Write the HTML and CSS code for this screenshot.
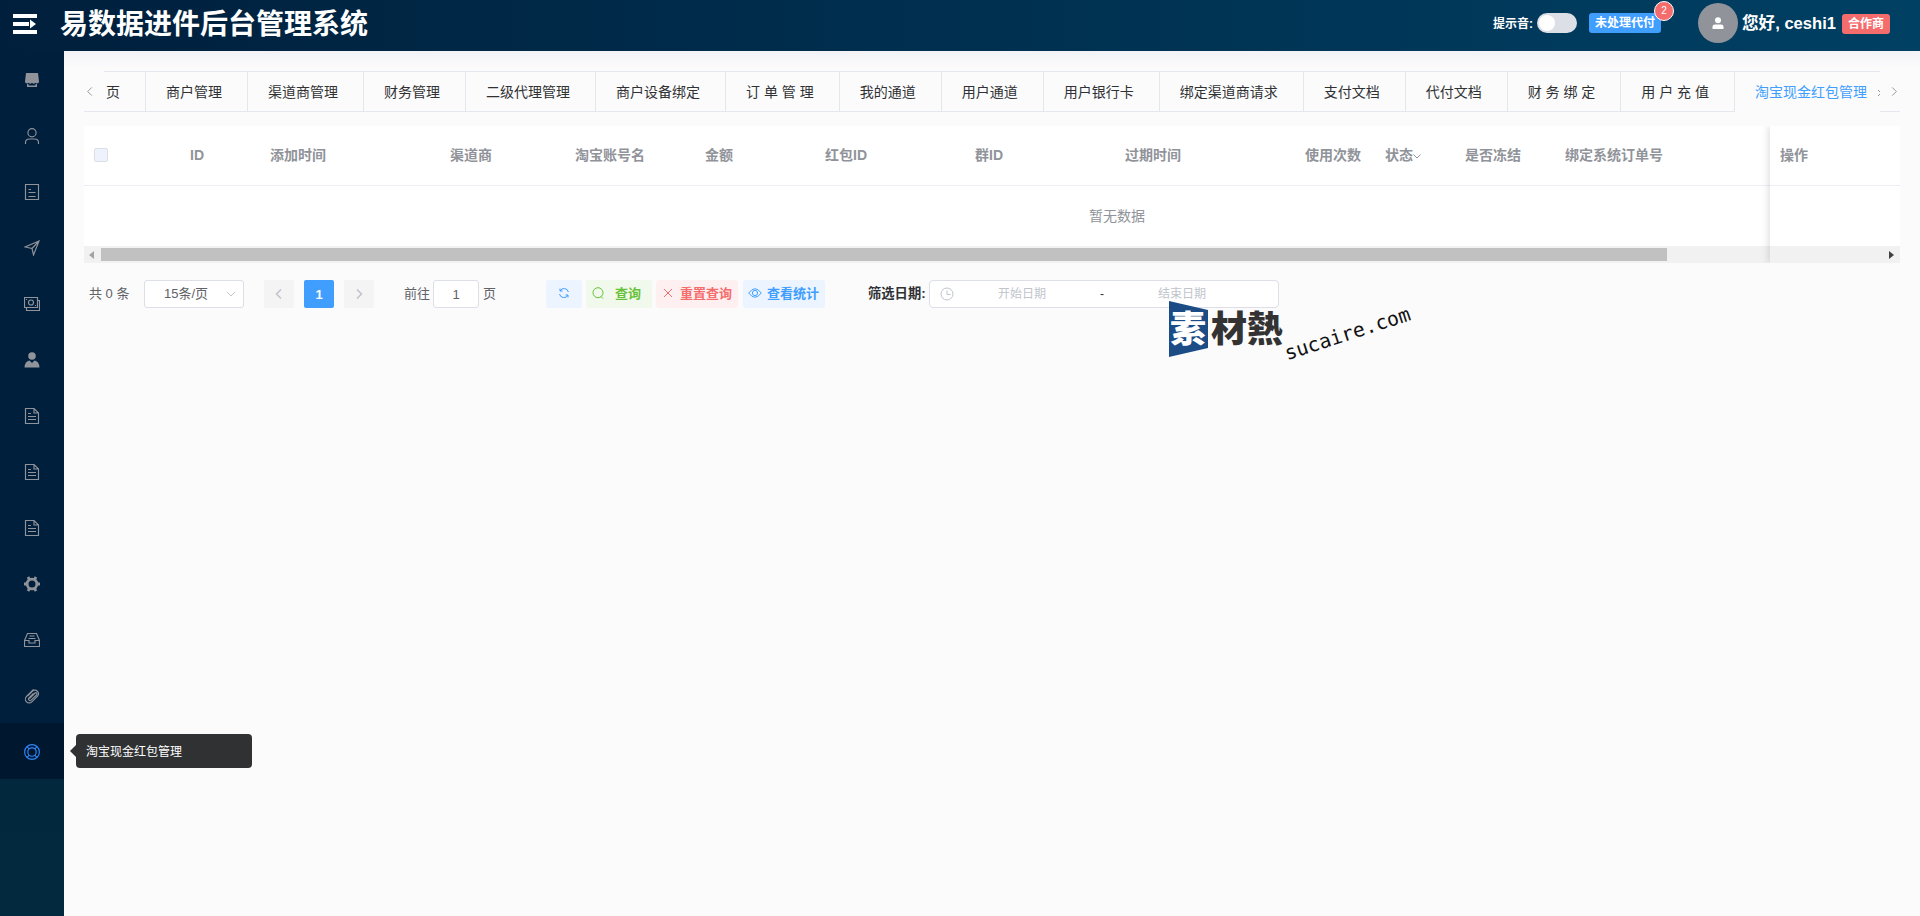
FILE: index.html
```
<!DOCTYPE html>
<html lang="zh-CN">
<head>
    <meta charset="UTF-8">
    <meta name="viewport" content="width=device-width, initial-scale=1.0">
    <title>易数据进件后台管理系统</title>
    <link rel="stylesheet" href="styles.css">
</head>
<body>
    <svg class="sprite">
        <symbol id="doc" viewBox="0 0 16 16">
            <path d="M1.500.5H10L14.500 5v10.500H1.500zM10 .5V5h4.500M4 5.500h3M4 8.500h8M4 11.500h8"/>
        </symbol>
    </svg>

    <header class="header">
        <svg class="menu-toggle" viewBox="0 0 24 20">
            <path d="M0 0h24v4H0zM0 8h16v4H0zM0 16h24v4H0zM17 5.500L23 10l-6 4.500z"/>
        </svg>
        <h1>易数据进件后台管理系统</h1>
        <div class="header-right">
            <span class="sound">提示音:</span>
            <span class="switch"></span>
            <span class="tag tag-blue">未处理代付<sup class="badge">2</sup></span>
            <span class="avatar">
                <svg viewBox="0 0 12 12"><circle cx="6" cy="3.200" r="3"/><path d="M.5 12V9.800Q.5 7.500 3 7.500h6q2.500 0 2.500 2.300V12z"/></svg>
            </span>
            <span class="hello">您好, ceshi1</span>
            <span class="tag tag-red">合作商</span>
        </div>
    </header>

    <div class="layout">
        <aside class="sidebar">
            <ul class="menu">
                <li><svg class="solid" viewBox="0 0 16 16"><path d="M2 1h12l1 8.500a2 2 0 0 1-3.500 1.300 2.300 2.300 0 0 1-3.500 0 2.300 2.300 0 0 1-3.500 0A2 2 0 0 1 1 9.500z"/><path d="M3 12h1.500v1.500h7V12H13v3H3z"/></svg></li>
                <li><svg viewBox="0 0 16 16"><circle cx="8" cy="4.700" r="4.100"/><path d="M1.500 16v-1.500q0-3.500 4-3.500h5q4 0 4 3.500V16"/></svg></li>
                <li><svg viewBox="0 0 16 16"><path d="M1.500.5h13v15h-13zM4.500 5.500h2.500M4.500 8.500h7M4.500 12.500h7"/></svg></li>
                <li><svg viewBox="0 0 16 16"><path d="M15 1L1 7l7 1.500L9.500 15zM15 1L8 8.500"/></svg></li>
                <li><svg viewBox="0 0 16 16"><path d="M.5 1.500h13v10H.5zM13.500 4.500h2v10h-13v-3"/><circle cx="7" cy="6.500" r="2.500"/><path d="M2 3.500h1M11 9.500h1"/></svg></li>
                <li><svg class="solid" viewBox="0 0 16 16"><circle cx="8" cy="4" r="3.800"/><path d="M.5 15.500q.5-6.500 5-7L8 11l2.500-2.500q4.500.5 5 7z"/></svg></li>
                <li><svg><use href="#doc"/></svg></li>
                <li><svg><use href="#doc"/></svg></li>
                <li><svg><use href="#doc"/></svg></li>
                <li><svg class="gear" viewBox="0 0 16 16"><circle cx="8" cy="8" r="4.900"/><path d="M8 0v3M8 13v3M1.070 4l2.600 1.500M12.330 10.500l2.600 1.500M1.070 12l2.600-1.500M12.330 5.500l2.600-1.500" transform="rotate(30 8 8)"/></svg></li>
                <li><svg viewBox="0 0 16 16"><path d="M.5 8.500L3.500 1.500h9l3 7v6H.5zM.5 8.500h4.500v2.500h6V8.500h4.500M5.500 4h5M4.500 6.500h7"/></svg></li>
                <li><svg viewBox="0 0 16 16"><path d="M9.500 1.500L2.500 8.500a3.700 3.700 0 0 0 5.300 5.300l6-6a3.600 3.600 0 0 0-5-5L3.800 7.800M11.500 4.500l-6 6M11.500 4.500a1.500 1.500 0 0 1 1 2.500l-5.300 5.200a1.500 1.500 0 0 1-2.200-2.200l4.500-4.500"/></svg></li>
                <li class="active">
                    <svg viewBox="0 0 16 16"><circle cx="8" cy="8" r="7.400"/><circle cx="8" cy="8" r="4.200"/><path d="M3 2.600l2.200 2.200M13 2.600l-2.200 2.200M3 13.400l2.200-2.200M13 13.400l-2.200-2.200"/></svg>
                    <div class="tooltip">淘宝现金红包管理</div>
                </li>
            </ul>
        </aside>

        <main class="main">
            <div class="tabs">
                <svg class="tabs-arrow" viewBox="0 0 12 12"><path d="M8 1.500L3.500 6 8 10.500"/></svg>
                <div class="tabs-nav">
                    <div class="tab first">页</div>
                    <div class="tab">商户管理</div>
                    <div class="tab">渠道商管理</div>
                    <div class="tab">财务管理</div>
                    <div class="tab">二级代理管理</div>
                    <div class="tab">商户设备绑定</div>
                    <div class="tab">订 单 管 理</div>
                    <div class="tab">我的通道</div>
                    <div class="tab">用户通道</div>
                    <div class="tab">用户银行卡</div>
                    <div class="tab">绑定渠道商请求</div>
                    <div class="tab">支付文档</div>
                    <div class="tab">代付文档</div>
                    <div class="tab">财 务 绑 定</div>
                    <div class="tab">用 户 充 值</div>
                    <div class="tab current">淘宝现金红包管理<svg viewBox="0 0 8 8"><path d="M1 1l6 6M7 1L1 7"/></svg></div>
                </div>
                <svg class="tabs-arrow right" viewBox="0 0 12 12"><path d="M4 1.500L8.500 6 4 10.500"/></svg>
            </div>

            <div class="table">
                <div class="table-head">
                    <div><span class="checkbox"></span></div>
                    <div>ID</div>
                    <div>添加时间</div>
                    <div>渠道商</div>
                    <div>淘宝账号名</div>
                    <div>金额</div>
                    <div>红包ID</div>
                    <div>群ID</div>
                    <div>过期时间</div>
                    <div>使用次数</div>
                    <div>状态<svg viewBox="0 0 8 8"><path d="M.5 2.500L4 6l3.500-3.500"/></svg></div>
                    <div>是否冻结</div>
                    <div>绑定系统订单号</div>
                    <div>操作</div>
                </div>
                <div class="table-empty">暂无数据</div>
                <div class="scrollbar">
                    <svg viewBox="0 0 5 8"><path d="M5 0v8L0 4z"/></svg>
                    <div class="thumb"></div>
                    <svg class="dark" viewBox="0 0 5 8"><path d="M0 0v8l5-4z"/></svg>
                </div>
                <div class="fixed-column"></div>
            </div>

            <div class="toolbar">
                <span class="total">共 0 条</span>
                <div class="select">15条/页<svg viewBox="0 0 10 10"><path d="M1 3l4 4 4-4"/></svg></div>
                <div class="pager">
                    <span><svg viewBox="0 0 12 12"><path d="M8 1.500L3.500 6 8 10.500"/></svg></span>
                    <span class="on">1</span>
                    <span><svg viewBox="0 0 12 12"><path d="M4 1.500L8.500 6 4 10.500"/></svg></span>
                </div>
                <div class="jump">前往<span class="jump-input">1</span>页</div>
                <div class="buttons">
                    <span class="btn blue refresh"><svg viewBox="0 0 12 12"><path d="M2 4V1.500M2 4h2.500M2 4a4.500 4.500 0 0 1 8.400 1M1.500 7a4.500 4.500 0 0 0 8.500 1M10 8H7.500M10 8v2.500"/></svg></span>
                    <span class="btn green"><svg viewBox="0 0 12 12"><circle cx="6" cy="5.700" r="5"/><path d="M9 9.500l2 2"/></svg>查询</span>
                    <span class="btn red"><svg viewBox="0 0 12 12"><path d="M2 2l8 8M10 2l-8 8"/></svg>重置查询</span>
                    <span class="btn blue view"><svg viewBox="0 0 14 12"><path d="M.7 6Q7-2.500 13.300 6 7 14.500.7 6z"/><circle cx="7" cy="6" r="2.600"/></svg>查看统计</span>
                </div>
                <span class="date-label">筛选日期:</span>
                <div class="date-range">
                    <svg viewBox="0 0 14 14"><circle cx="7" cy="7" r="6"/><path d="M7 3.500V7.500h3.500"/></svg>
                    <span class="date">开始日期</span>
                    <span class="dash">-</span>
                    <span class="date">结束日期</span>
                </div>
            </div>
        </main>
    </div>

    <div class="watermark">
        <svg viewBox="0 0 39 56"><path d="M0 0l39 9v38L0 56z"/></svg>
        <span class="wm-first">素</span>
        <span class="wm-rest">材熱</span>
        <span class="wm-url">sucaire.com</span>
    </div>
</body>
</html>
```
FILE: styles.css
```
* {
    box-sizing: border-box;
}
body {
    margin: 0;
    height: 916px;
    overflow: hidden;
    font-family: "Liberation Sans", "Noto Sans CJK SC", sans-serif;
    font-size: 14px;
    color: #303133;
    background-color: #fbfbfc;
}
svg {
    fill: none;
    stroke: currentColor;
    flex: none;
}
.sprite {
    display: none;
}

/* Header */
.header {
    display: flex;
    align-items: center;
    height: 51px;
    padding: 0 30px 4px 13px;
    color: #fff;
    background: linear-gradient(to right, #001f3c, #004063);
}
.menu-toggle {
    width: 24px;
    height: 20px;
    fill: #fff;
    stroke: none;
}
.header h1 {
    margin: 2px 0 0 23px;
    font-size: 28px;
    line-height: 40px;
}
.header-right {
    display: flex;
    align-items: center;
    height: 40px;
    margin-left: auto;
    font-weight: bold;
}
.sound {
    margin-top: -2px;
    font-size: 12px;
}
.switch {
    width: 40px;
    height: 20px;
    margin: -1px 12px 0 4px;
    padding: 2px;
    border-radius: 10px;
    background-color: #dcdfe6;
}
.switch::before {
    content: "";
    display: block;
    width: 16px;
    height: 16px;
    border-radius: 50%;
    background-color: #fff;
}
.tag {
    position: relative;
    height: 20px;
    padding: 0 6px;
    border-radius: 3px;
    font-size: 12px;
    line-height: 20px;
}
.tag-blue {
    margin-top: -1px;
    background-color: #409eff;
}
.tag-red {
    margin: 1px 0 0 6px;
    background-color: #f56c6c;
}
.badge {
    position: absolute;
    top: -12px;
    right: -13px;
    width: 20px;
    height: 20px;
    border: 1px solid #fff;
    border-radius: 50%;
    font-weight: normal;
    line-height: 18px;
    text-align: center;
    background-color: #f56c6c;
}
.avatar {
    display: flex;
    align-items: center;
    justify-content: center;
    width: 40px;
    height: 40px;
    margin: -1px 4px 0 37px;
    border-radius: 50%;
    background-color: #909399;
}
.avatar svg {
    width: 12px;
    height: 12px;
    fill: #fff;
    stroke: none;
}
.hello {
    width: 94px;
    margin-top: -3px;
    font-size: 16.6px;
    white-space: nowrap;
}

/* Sidebar */
.layout {
    display: flex;
    height: 865px;
}
.sidebar {
    width: 64px;
    background: linear-gradient(#02233c, #02293e);
}
.menu {
    margin: 0;
    padding: 0;
    list-style: none;
    color: #909399;
    background: #001f3c;
}
.menu li {
    position: relative;
    display: flex;
    align-items: center;
    justify-content: center;
    height: 56px;
    padding-top: 2px;
}
.menu svg {
    width: 16px;
    height: 16px;
    stroke-width: 1.15;
}
.menu .solid {
    fill: currentColor;
    stroke: none;
}
.menu .gear {
    stroke-width: 2.8;
}
.menu .active {
    color: #2d86f5;
    background-color: #001730;
}
.tooltip {
    position: absolute;
    left: 76px;
    top: 11px;
    z-index: 5;
    width: 176px;
    height: 34px;
    padding-left: 10px;
    border-radius: 4px;
    font-size: 12px;
    line-height: 36px;
    color: #fff;
    background-color: #303133;
}
.tooltip::before {
    content: "";
    position: absolute;
    left: -6px;
    top: 11px;
    border: 6px solid transparent;
    border-left: 0;
    border-right-color: #303133;
}

/* Main */
.main {
    flex: 1;
    min-width: 0;
    padding: 20px 20px 0;
    background: linear-gradient(#f1f3f6, #fbfbfc 16px);
}
.tabs {
    display: flex;
    height: 41px;
}
.tabs-arrow {
    width: 20px;
    height: 41px;
    padding: 15px 8px 14px 0;
    color: #909399;
    border-bottom: 1px solid #e4e7ed;
}
.tabs-arrow.right {
    padding: 15px 0 14px 8px;
}
.tabs-nav {
    display: flex;
    width: 1776px;
    overflow: hidden;
    border-top: 1px solid #e4e7ed;
}
.tab {
    flex: none;
    height: 40px;
    padding: 0 25px 0 20px;
    border-left: 1px solid #e4e7ed;
    border-bottom: 1px solid #e4e7ed;
    line-height: 40px;
    white-space: nowrap;
}
.tab.first {
    padding-left: 2px;
    border-left: none;
}
.tab.current {
    color: #409eff;
    border-bottom: none;
}
.tab.current svg {
    width: 8px;
    height: 8px;
    margin-left: 10px;
    color: #909399;
}

.table {
    position: relative;
    height: 137px;
    margin-top: 14px;
    background-color: #fff;
}
.table-head {
    display: grid;
    grid-template-columns: 96px 80px 180px 125px 130px 120px 150px 150px 180px 80px 80px 100px 215px 130px;
    height: 60px;
    border-bottom: 1px solid #ebeef5;
    line-height: 59px;
    font-weight: bold;
    color: #909399;
}
.table-head div {
    padding-left: 10px;
    white-space: nowrap;
}
.table-head svg {
    width: 8px;
    height: 8px;
}
.checkbox {
    display: block;
    width: 14px;
    height: 14px;
    margin-top: 22px;
    border: 1px solid #dcdfe6;
    border-radius: 2px;
    background-color: #edf2fc;
}
.table-empty {
    width: 1570px;
    height: 60px;
    margin-left: 248px;
    line-height: 60px;
    text-align: center;
    color: #909399;
}
.scrollbar {
    display: flex;
    align-items: center;
    height: 17px;
    padding: 0 6px 0 5px;
    background-color: #f1f1f1;
}
.scrollbar svg {
    width: 5px;
    height: 8px;
    fill: #a3a3a3;
    stroke: none;
}
.scrollbar .dark {
    margin-left: auto;
    fill: #404040;
}
.thumb {
    width: 1566px;
    height: 13px;
    margin-left: 7px;
    background-color: #c1c1c1;
}
.fixed-column {
    position: absolute;
    right: 0;
    top: 0;
    width: 130px;
    height: 100%;
    box-shadow: -2px 0 7px rgba(0, 0, 0, 0.12);
    clip-path: inset(0 0 0 -12px);
}

/* Pagination, buttons, date filter */
.toolbar {
    display: flex;
    height: 28px;
    margin-top: 17px;
    padding-left: 5px;
    font-size: 13px;
    line-height: 27px;
    color: #606266;
}
.total {
    width: 55px;
    white-space: nowrap;
}
.select {
    display: flex;
    align-items: center;
    justify-content: space-between;
    width: 100px;
    padding: 0 7px 0 19px;
    border: 1px solid #dcdfe6;
    border-radius: 3px;
    line-height: 24px;
    background-color: #fff;
}
.select svg {
    width: 10px;
    height: 10px;
    color: #c0c4cc;
}
.pager {
    display: flex;
    gap: 10px;
    margin-left: 20px;
}
.pager span {
    display: flex;
    align-items: center;
    justify-content: center;
    width: 30px;
    border-radius: 2px;
    font-weight: bold;
    color: #c0c4cc;
    background-color: #f4f4f5;
}
.pager svg {
    width: 12px;
    height: 12px;
    stroke-width: 1.6;
}
.pager .on {
    color: #fff;
    background-color: #409eff;
}
.jump {
    display: flex;
    margin-left: 30px;
    line-height: 28px;
}
.jump-input {
    width: 46px;
    margin: 0 4px 0 3px;
    border: 1px solid #dcdfe6;
    border-radius: 3px;
    line-height: 27px;
    text-align: center;
    background-color: #fff;
}
.buttons {
    display: flex;
    gap: 4px;
    margin-left: 50px;
}
.btn {
    display: flex;
    align-items: center;
    justify-content: space-between;
    width: 82px;
    height: 28px;
    padding: 0 6px 2px;
    border-radius: 3px;
    font-weight: bold;
}
.btn svg {
    width: 12px;
    height: 12px;
}
.btn.blue {
    color: #409eff;
    background-color: #ecf5ff;
}
.btn.refresh {
    width: 36px;
    padding: 0 12px 2px;
}
.btn.green {
    width: 66px;
    padding-right: 11px;
    color: #67c23a;
    background-color: #f0f9eb;
}
.btn.red {
    color: #f56c6c;
    background-color: #fef0f0;
}
.btn.view {
    margin-left: 1px;
    padding-left: 5px;
}
.btn.view svg {
    width: 14px;
}
.date-label {
    margin-left: 43px;
    width: 61px;
    font-size: 13.3px;
    font-weight: bold;
    line-height: 28px;
    white-space: nowrap;
    color: #303133;
}
.date-range {
    display: flex;
    align-items: center;
    width: 350px;
    padding-left: 10px;
    border: 1px solid #dcdfe6;
    border-radius: 4px;
    font-size: 12px;
    color: #c0c4cc;
    background-color: #fff;
}
.date-range svg {
    width: 14px;
    height: 14px;
}
.date {
    width: 136px;
    text-align: center;
}
.date-range .dash {
    width: 24px;
    text-align: center;
    color: #303133;
}

/* Watermark */
.watermark {
    position: absolute;
    left: 1169px;
    top: 301px;
    width: 250px;
    height: 60px;
    font-family: "Noto Sans CJK TC", sans-serif;
    font-size: 36px;
    font-weight: 900;
    line-height: 56px;
}
.watermark svg {
    width: 39px;
    height: 56px;
    fill: #1c4c86;
    stroke: none;
}
.watermark span {
    position: absolute;
    top: -3px;
    white-space: nowrap;
}
.wm-first {
    left: 1px;
    color: #fff;
}
.wm-rest {
    left: 42px;
    color: #333;
}
.watermark .wm-url {
    left: 120px;
    top: 41px;
    font: 19.8px/24px "DejaVu Sans Mono", monospace;
    color: #111;
    transform: rotate(-18deg);
    transform-origin: 0 100%;
}
```
